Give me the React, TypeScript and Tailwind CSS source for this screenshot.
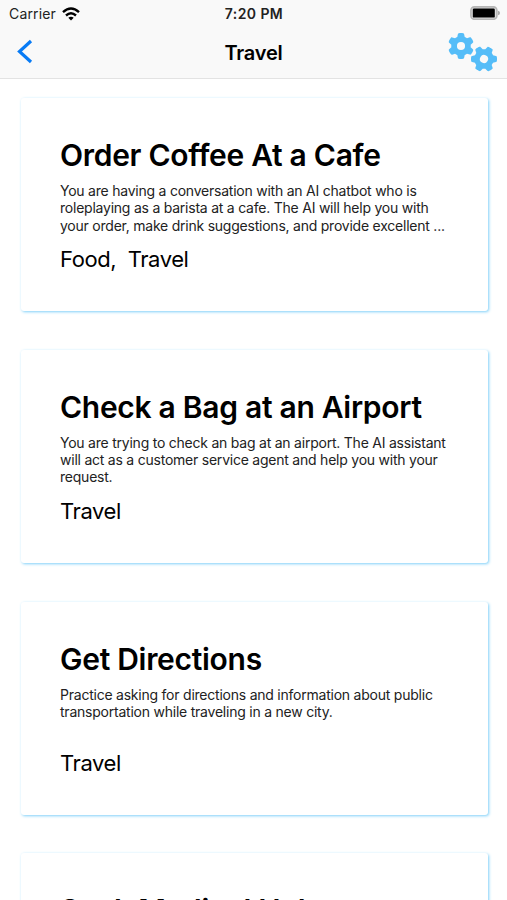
import { FaGear } from "react-icons/fa6";

type Scenario = {
  title: string;
  lines: string[];
  tags: string[];
};

const scenarios: Scenario[] = [
  {
    title: "Order Coffee At a Cafe",
    lines: [
      "You are having a conversation with an AI chatbot who is",
      "roleplaying as a barista at a cafe. The AI will help you with",
      "your order, make drink suggestions, and provide excellent ...",
    ],
    tags: ["Food", "Travel"],
  },
  {
    title: "Check a Bag at an Airport",
    lines: [
      "You are trying to check an bag at an airport. The AI assistant",
      "will act as a customer service agent and help you with your",
      "request.",
    ],
    tags: ["Travel"],
  },
  {
    title: "Get Directions",
    lines: [
      "Practice asking for directions and information about public",
      "transportation while traveling in a new city.",
    ],
    tags: ["Travel"],
  },
  {
    title: "Seek Medical Help",
    lines: [],
    tags: [],
  },
];

function StatusBar() {
  return (
    <div className="grid h-[27px] grid-cols-3 items-center pl-[9px] pr-[7px] text-[14px] text-[#222]">
      <div className="flex items-center gap-[6px]">
        <span className="tracking-[0.15px]">Carrier</span>
        <svg width="18" height="14" viewBox="0 0 18 14" fill="none" stroke="#000" strokeWidth="2.4">
          <path d="M1 5.2Q9-2.2 17 5.2" />
          <path d="M4 8.5Q9 4 14 8.5" />
          <path d="M9 13.5 6.3 10.8Q9 8.6 11.7 10.8Z" fill="#000" stroke="none" />
        </svg>
      </div>
      <span className="mr-px text-center font-semibold tracking-[0.4px]">7:20 PM</span>
      <svg className="mt-[-1px] justify-self-end" width="30" height="14" viewBox="0 0 30 14">
        <rect x="0.9" y="0.9" width="26" height="12.4" rx="3.5" fill="#ddd" stroke="#b5b5b5" strokeWidth="1.6" />
        <rect x="2.8" y="2.6" width="22" height="9" rx="1.2" fill="#000" />
        <path d="M28 4.7Q30 5.3 30 7T28 9.3Z" fill="#aaa" />
      </svg>
    </div>
  );
}

function NavBar() {
  return (
    <div className="grid h-[51px] grid-cols-[1fr_auto_1fr] items-center pl-[17px] pr-[10px]">
      <svg
        className="mb-[2px]"
        width="17"
        height="25"
        viewBox="0 0 17 25"
        fill="none"
        stroke="#087bf5"
        strokeWidth="3.2"
      >
        <path d="M14 2 2.5 12.5 14 23" />
      </svg>
      <h1 className="mr-[7px] text-center text-[20px] font-semibold tracking-[-0.2px] text-black">Travel</h1>
      <div className="flex h-[40px] justify-end text-[#55bdf8]">
        <FaGear size={26} />
        <FaGear size={26} className="-ml-[3px] mt-[13px] rotate-30" />
      </div>
    </div>
  );
}

function ScenarioCard({ title, lines, tags }: Scenario) {
  return (
    <article className="h-[213px] shrink-0 rounded-[3px] bg-white px-[39px] pt-[37px] shadow-[1px_1px_3px_#7fd0f9]">
      <h2 className="text-[30px] leading-[40px] font-semibold tracking-[-0.29px] whitespace-nowrap text-black">
        {title}
      </h2>
      <div className="mt-[7px] h-[52px] text-[14px] leading-[17.25px] tracking-[-0.23px] whitespace-nowrap text-[#222]">
        {lines.map((line) => (
          <p key={line}>{line}</p>
        ))}
      </div>
      <p className="mt-[10px] text-[22px] leading-[30px] tracking-[-0.43px] whitespace-pre text-black">
        {tags.join(",  ")}
      </p>
    </article>
  );
}

export default function App() {
  return (
    <div className="flex h-[900px] flex-col overflow-hidden bg-white font-['Inter',sans-serif]">
      <header className="h-[79px] shrink-0 border-b border-[#e3e3e3] bg-[#f9f9f9]">
        <StatusBar />
        <NavBar />
      </header>
      <main className="flex min-h-0 flex-1 flex-col gap-[38.8px] overflow-hidden pt-[19px] pr-[19px] pl-[21px]">
        {scenarios.map((scenario) => (
          <ScenarioCard key={scenario.title} {...scenario} />
        ))}
      </main>
    </div>
  );
}
